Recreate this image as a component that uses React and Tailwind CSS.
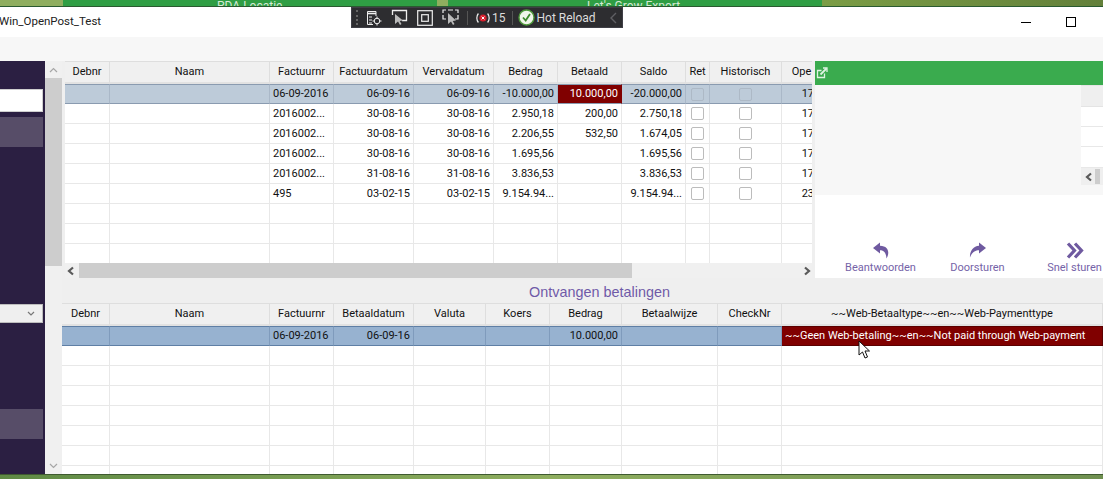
const FONT = "font-['Roboto',sans-serif]";

function Chevron({ dir = 'left', className = '' }) {
  const d = dir === 'left' ? 'M7 1.5 L3 5 L7 8.5' : 'M3 1.5 L7 5 L3 8.5';
  return (
    <svg width="10" height="10" viewBox="0 0 10 10" className={className}>
      <path d={d} fill="none" stroke="#5a5a5a" strokeWidth="2.2" />
    </svg>
  );
}

function Check() {
  return <span className="block w-[13px] h-[13px] mx-auto rounded-[2px] border border-[#bcbcbc] bg-white" />;
}
function CheckDim() {
  return <span className="block w-[13px] h-[13px] mx-auto rounded-[2px] border border-[#adb9c6] bg-[#bdcbd9]" />;
}

const TOP_COLS = 'grid-cols-[45px_160px_64px_80px_80px_64px_64px_64px_24px_72px_36px]';
const BOT_COLS = 'grid-cols-[48px_160px_64px_80px_72px_64px_72px_96px_64px_321px]';

const topHead = ['Debnr', 'Naam', 'Factuurnr', 'Factuurdatum', 'Vervaldatum', 'Bedrag', 'Betaald', 'Saldo', 'Ret', 'Historisch', 'Ope'];
const botHead = ['Debnr', 'Naam', 'Factuurnr', 'Betaaldatum', 'Valuta', 'Koers', 'Bedrag', 'Betaalwijze', 'CheckNr', '~~Web-Betaaltype~~en~~Web-Paymenttype'];

const topRows = [
  ['', '', '06-09-2016', '06-09-16', '06-09-16', '-10.000,00', '10.000,00', '-20.000,00', 'c', 'c', '17'],
  ['', '', '2016002...', '30-08-16', '30-08-16', '2.950,18', '200,00', '2.750,18', 'c', 'c', '17'],
  ['', '', '2016002...', '30-08-16', '30-08-16', '2.206,55', '532,50', '1.674,05', 'c', 'c', '17'],
  ['', '', '2016002...', '30-08-16', '30-08-16', '1.695,56', '', '1.695,56', 'c', 'c', '17'],
  ['', '', '2016002...', '31-08-16', '31-08-16', '3.836,53', '', '3.836,53', 'c', 'c', '17'],
  ['', '', '495', '03-02-15', '03-02-15', '9.154.94...', '', '9.154.94...', 'c', 'c', '23'],
  ['', '', '', '', '', '', '', '', '', '', ''],
  ['', '', '', '', '', '', '', '', '', '', ''],
  ['', '', '', '', '', '', '', '', '', '', ''],
];

function HeadCell({ children, className = '' }) {
  return (
    <div className={`h-[23px] pt-[1px] flex items-center justify-center whitespace-nowrap overflow-hidden bg-[#f0f0f0] border-r border-[#dedede] border-t border-t-[#dedede] border-b-2 border-b-[#e2e2e2] text-[11px] text-[#111] ${className}`}>
      {children}
    </div>
  );
}

function TopTable() {
  return (
    <div className="w-[747px] h-[202px] overflow-hidden bg-white">
      <div className={`grid ${TOP_COLS}`}>
        {topHead.map((h, i) => <HeadCell key={i} className={i === 10 ? 'pl-[4px]' : ''}>{h}</HeadCell>)}
      </div>
      {topRows.map((r, ri) => (
        <div key={ri} className={`grid ${TOP_COLS}`}>
          {r.map((c, ci) => {
            const sel = ri === 0;
            const red = sel && ci === 6;
            const left = ci === 2;
            return (
              <div
                key={ci}
                className={`h-[20px] flex items-center overflow-hidden whitespace-nowrap text-[11px] px-[3px] border-r border-b ${c === 'c' ? '' : 'pt-[1px]'} ${left ? 'justify-start' : 'justify-end'} ${
                  red
                    ? 'bg-[#800000] text-white border-b-[#8a9bb0] border-t border-t-[#8a9bb0] border-r-[#800000]'
                    : sel
                    ? 'bg-[#bdcbd9] text-[#111] border-t border-t-[#8a9bb0] border-b-[#8a9bb0] border-r-[#aab8c8]'
                    : 'bg-white text-[#111] border-[#e8e8e8]'
                }`}
              >
                {c === 'c' ? (sel ? <CheckDim /> : <Check />) : c}
              </div>
            );
          })}
        </div>
      ))}
    </div>
  );
}

const botRows = [
  ['', '', '06-09-2016', '06-09-16', '', '', '10.000,00', '', '', '~~Geen Web-betaling~~en~~Not paid through Web-payment'],
  ...Array.from({ length: 7 }, () => ['', '', '', '', '', '', '', '', '', '']),
];

function BottomTable() {
  return (
    <div className="w-full h-[171px] overflow-hidden bg-white">
      <div className={`grid ${BOT_COLS}`}>
        {botHead.map((h, i) => <HeadCell key={i}>{h}</HeadCell>)}
      </div>
      {botRows.map((r, ri) => (
        <div key={ri} className={`grid ${BOT_COLS}`}>
          {r.map((c, ci) => {
            const sel = ri === 0;
            const red = sel && ci === 9;
            const left = ci === 2 || ci === 9;
            return (
              <div
                key={ci}
                className={`h-[20px] flex items-center overflow-hidden whitespace-nowrap text-[11px] px-[3px] pt-[1px] border-r border-b ${left ? 'justify-start' : 'justify-end'} ${
                  red
                    ? 'bg-[#800000] text-white border-t border-[#5c0000]'
                    : sel
                    ? 'bg-[#97b2d0] text-[#111] border-t border-t-[#5f7fa5] border-b-[#5f7fa5] border-r-[#7f9bbc]'
                    : 'bg-white text-[#111] border-[#e8e8e8]'
                }`}
              >
                {c}
              </div>
            );
          })}
        </div>
      ))}
    </div>
  );
}

function ActionReply() {
  return (
    <svg width="18" height="17" viewBox="0 0 18 17" fill="#6f5aa0">
      <path d="M8 0.5 L1 6 L8 11.5 V8.2 C11.5 8.2 14 10 14.5 16.5 C17.5 12 17.5 4 8 3.8 Z" />
    </svg>
  );
}
function ActionForward() {
  return (
    <svg width="18" height="17" viewBox="0 0 18 17" fill="#6f5aa0">
      <path d="M10 0.5 L17 6 L10 11.5 V8.2 C6.5 8.2 3 10 1 15.5 C0.5 10 4 4 10 3.8 Z" />
    </svg>
  );
}
function ActionFast() {
  return (
    <svg width="18" height="17" viewBox="0 0 18 17" fill="none" stroke="#6f5aa0" strokeWidth="3.2">
      <path d="M2 1.5 L8.5 8.5 L2 15.5" />
      <path d="M9 1.5 L15.5 8.5 L9 15.5" />
    </svg>
  );
}

function Action({ icon, label }) {
  return (
    <div className="w-[97px] shrink-0 flex flex-col items-center gap-[2px]">
      {icon}
      <span className="text-[11px] leading-[14px] text-[#7563a8] whitespace-nowrap">{label}</span>
    </div>
  );
}

function RightPanel() {
  return (
    <div className="w-[288px] h-full flex flex-col bg-white">
      <div className="h-[24px] bg-[#3aab4e] flex items-center pl-[1px]">
        <svg width="12" height="12" viewBox="0 0 12 12" fill="none" stroke="#dff3e3" strokeWidth="1.3">
          <path d="M8.5 6.5 V10.5 H1.5 V3.5 H5.5" />
          <path d="M4.5 7.5 L10.5 1.5" strokeWidth="1.8" />
          <path d="M7 1 H11 V5" />
        </svg>
      </div>
      <div className="h-[110px] bg-[#f7f7f7] flex justify-end">
        <div className="w-[22px] h-[100px] flex flex-col">
          <div className="h-[22px] bg-[#efefef] border-b border-t border-[#e4e4e4]" />
          <div className="h-[20px] bg-white border-b border-[#e8e8e8]" />
          <div className="h-[20px] bg-white border-b border-[#e8e8e8]" />
          <div className="h-[21px] bg-white border-b border-[#e8e8e8]" />
          <div className="h-[17px] bg-[#efefef] flex items-center pl-[3px]">
            <Chevron />
            <div className="w-[5px] h-[15px] ml-[1px] bg-[#cdcdcd]" />
          </div>
        </div>
      </div>
      <div className="flex-1 bg-white flex items-end pb-[3px] pl-[17px] overflow-hidden">
        <Action icon={<ActionReply />} label="Beantwoorden" />
        <Action icon={<ActionForward />} label="Doorsturen" />
        <Action icon={<ActionFast />} label="Snel sturen" />
      </div>
    </div>
  );
}

function DevToolbar() {
  return (
    <div className="absolute left-[351px] top-[7px] w-[272px] h-[21px] bg-[#2d2d30] border border-[#3f3f46] flex items-center text-[#dcdcdc]">
      <div className="w-[5px] h-[15px] ml-[4px] border-l-2 border-dotted border-[#666]" />
      <svg width="16" height="16" viewBox="0 0 16 16" className="ml-[5px]" fill="none" stroke="#eee" strokeWidth="1">
        <path d="M1.5 1.5 H10 V6 M1.5 1.5 V14.5 H7" />
        <path d="M1.5 3.5 H10" strokeWidth="1.6" />
        <path d="M3 7 H6 M3 10 H6 M3 13 H6" />
        <circle cx="11" cy="11" r="2.8" />
        <path d="M11 6.5 V9 M11 13 V15.5 M6.5 11 H9 M13 11 H15.5" />
      </svg>
      <svg width="17" height="17" viewBox="0 0 17 17" className="ml-[9px]" fill="none" stroke="#eee" strokeWidth="1">
        <path d="M1.5 6 V1.5 H15.5 V11.5 H11" strokeWidth="1.3" />
        <path d="M4 5 V15 L7 12.5 L9 16 L10.5 15 L8.7 12 L12 11.5 Z" fill="#bbb" stroke="none" />
      </svg>
      <svg width="16" height="16" viewBox="0 0 16 16" className="ml-[9px]" fill="none" stroke="#eee" strokeWidth="1.2">
        <rect x="0.7" y="0.7" width="14.6" height="14.6" />
        <rect x="4.7" y="4.7" width="6.6" height="6.6" />
      </svg>
      <svg width="17" height="17" viewBox="0 0 17 17" className="ml-[9px]" fill="none" stroke="#eee" strokeWidth="1.2">
        <path d="M1 4 V1 H4 M6 1 H11 M13 1 H16 V4 M16 6 V10 H13 M1 6 V10 H4" />
        <path d="M6 4 V15 L9 12.5 L11 16 L12.5 15 L10.7 12 L14 11.5 Z" fill="#bbb" stroke="none" />
      </svg>
      <div className="w-px h-[14px] ml-[8px] bg-[#555]" />
      <svg width="16" height="14" viewBox="0 0 16 14" className="ml-[7px]" fill="none">
        <circle cx="8" cy="7" r="3.6" fill="#d81e2c" />
        <path d="M6.6 5.6 L9.4 8.4 M9.4 5.6 L6.6 8.4" stroke="#fff" strokeWidth="1" />
        <path d="M3.4 2.5 C1.3 5 1.3 9 3.4 11.5 M12.6 2.5 C14.7 5 14.7 9 12.6 11.5" stroke="#eee" strokeWidth="1.2" />
      </svg>
      <span className="ml-[1px] text-[12px] leading-none">15</span>
      <div className="w-px h-[14px] ml-[6px] bg-[#555]" />
      <svg width="17" height="17" viewBox="0 0 17 17" className="ml-[5px]" fill="none">
        <circle cx="8.5" cy="8.5" r="7.5" fill="#f0f5ea" stroke="#4f9a3c" strokeWidth="1.4" />
        <path d="M5 8.5 L7.7 11.5 L12 5" stroke="#3d8a2c" strokeWidth="1.8" />
      </svg>
      <span className="ml-[2px] text-[12px] leading-none whitespace-nowrap">Hot Reload</span>
      <svg width="9" height="12" viewBox="0 0 9 12" className="ml-[13px]" fill="none" stroke="#5f5f63" strokeWidth="1.4">
        <path d="M7 1 L2 6 L7 11" />
      </svg>
    </div>
  );
}

function TopStrip() {
  return (
    <div className="h-[7px] flex overflow-hidden border-b border-[#2a5a30] text-[12px] leading-[14px] text-[#d5e8d5]">
      <div className="w-[63px] bg-[#8fae5f]" />
      <div className="w-[374px] bg-[#2f9e44] relative">
        <span className="absolute left-[154px] -top-[1px] whitespace-nowrap">PDA Locatie</span>
      </div>
      <div className="w-[11px] bg-[#8fae5f]" />
      <div className="w-[374px] bg-[#2f9e44] relative">
        <span className="absolute left-[139px] -top-[1px] whitespace-nowrap">Let's Grow Export</span>
      </div>
      <div className="flex-1 bg-gradient-to-r from-[#7b9d45] to-[#63803a]" />
    </div>
  );
}

export default function App() {
  return (
    <div className={`w-[1103px] h-[479px] overflow-hidden flex flex-col bg-[#efefef] relative ${FONT}`}>
      <TopStrip />
      <div className="h-[30px] bg-white flex items-center relative">
        <span className="text-[11.5px] text-[#222] -ml-[1px] whitespace-nowrap">Win_OpenPost_Test</span>
        <div className="ml-auto flex items-center">
          <div className="w-[10px] h-px bg-black mr-[35px]" />
          <div className="w-[10px] h-[10px] border border-black mr-[27px]" />
        </div>
      </div>
      <div className="h-[24px] bg-[#f7f7f7]" />
      <div className="h-[413px] flex">
        <aside className="w-[45px] bg-[#2b1f42] flex flex-col pr-[2px]">
          <div className="h-[23px] mt-[28px] bg-white border border-[#cfcfcf] border-l-0" />
          <div className="h-[30px] mt-[5px] bg-[#574d68] " />
          <div className="h-[19px] mt-[157px] bg-[#efefef] border border-[#bdbdbd] border-l-0 flex items-center justify-end pr-[7px]">
            <svg width="8" height="6" viewBox="0 0 8 6" fill="none" stroke="#777" strokeWidth="1.2"><path d="M1 1 L4 4 L7 1" /></svg>
          </div>
          <div className="h-[30px] mt-[86px] bg-[#574d68]" />
        </aside>
        <div className="w-[17px] bg-[#f0f0f0] flex flex-col items-center">
          <div className="h-[17px] w-full flex items-center justify-center">
            <svg width="9" height="6" viewBox="0 0 9 6" fill="none" stroke="#a6a6a6" strokeWidth="1.2"><path d="M1 5 L4.5 1.5 L8 5" /></svg>
          </div>
          <div className="h-[188px] w-full bg-[#cdcdcd]" />
          <div className="flex-1" />
          <div className="h-[17px] w-full flex items-center justify-center">
            <svg width="9" height="6" viewBox="0 0 9 6" fill="none" stroke="#a6a6a6" strokeWidth="1.2"><path d="M1 1 L4.5 4.5 L8 1" /></svg>
          </div>
        </div>
        <div className="flex-1 flex flex-col min-w-0">
          <div className="h-[217px] flex">
            <div className="w-[753px] pl-[3px] flex flex-col">
              <TopTable />
              <div className="h-[15px] w-[747px] bg-[#f0f0f0] flex items-center">
                <Chevron className="ml-[1px] mr-[3px]" />
                <div className="w-[553px] h-full bg-[#cdcdcd]" />
                <Chevron dir="right" className="ml-[170px]" />
              </div>
            </div>
            <RightPanel />
          </div>
          <div className="h-[25px] flex items-center justify-center pl-[34px] pt-[5px]">
            <span className="text-[14.4px] font-['Liberation_Sans',sans-serif] text-[#6f5aa8]">Ontvangen betalingen</span>
          </div>
          <BottomTable />
        </div>
      </div>
      <div className="h-[5px] border-t border-[#3f5a30] bg-gradient-to-r from-[#5f8a45] via-[#8fae5f] to-[#6f9050]" />
      <DevToolbar />
      <svg width="13" height="19" viewBox="0 0 13 19" className="absolute left-[858px] top-[340px]">
        <path d="M1 1 V15 L4.5 12 L7 18 L9.5 17 L7 11 L11.5 11 Z" fill="#fff" stroke="#111" strokeWidth="1" />
      </svg>
    </div>
  );
}
